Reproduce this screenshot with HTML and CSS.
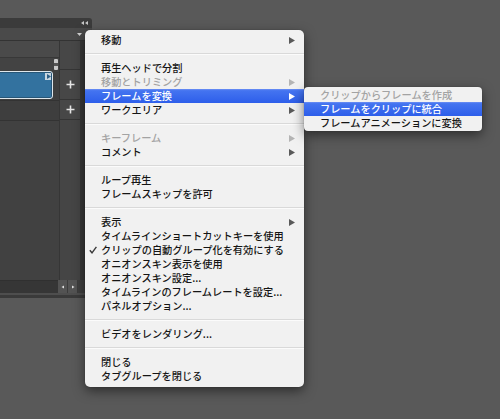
FILE: index.html
```html
<!DOCTYPE html>
<html lang="ja">
<head>
<meta charset="utf-8">
<title>Timeline menu</title>
<link rel="stylesheet" href="styles.css">
</head>
<body>
<div class="stage">
  <div class="panel">
    <div class="tabbar">
      <svg class="collapse" width="7" height="4" viewBox="0 0 7 4"><path d="M3 0 L0 2 L3 4Z M7 0 L4 2 L7 4Z" fill="#c8c8c8"/></svg>
    </div>
    <div class="toolbar">
      <svg class="dropdown" width="5" height="3" viewBox="0 0 5 3"><path d="M0 0 H5 L2.5 3Z" fill="#d0d0d0"/></svg>
    </div>
    <div class="timeline">
      <div class="tracks">
        <div class="ruler"></div>
        <div class="scrollrow"><div class="vthumb"><span></span></div></div>
        <div class="cliprow">
          <div class="clip">
            <div class="clip-btn"><svg width="5" height="5" viewBox="0 0 5 5"><path d="M1 0 L5 2.5 L1 5Z" fill="#2d5f86"/></svg></div>
          </div>
        </div>
        <div class="track"></div>
        <div class="empty"></div>
      </div>
      <div class="addcol">
        <div class="addcell top"></div>
        <div class="addcell clipadd"><svg width="9" height="9" viewBox="0 0 9 9"><path d="M4.5 0.5 V8.5 M0.5 4.5 H8.5" stroke="#e4e4e4" stroke-width="1.6"/></svg></div>
        <div class="addcell trackadd"><svg width="9" height="9" viewBox="0 0 9 9"><path d="M4.5 0.5 V8.5 M0.5 4.5 H8.5" stroke="#e4e4e4" stroke-width="1.6"/></svg></div>
        <div class="addcell rest"></div>
      </div>
      <div class="edge"></div>
    </div>
    <div class="hscroll">
      <div class="htrack"></div>
      <div class="hbtn"><svg width="4" height="4" viewBox="0 0 4 4"><path d="M3 0.5 L0.5 2 L3 3.5Z" fill="#e0e0e0"/></svg></div>
      <div class="hbtn"><svg width="4" height="4" viewBox="0 0 4 4"><path d="M1 0.5 L3.5 2 L1 3.5Z" fill="#e0e0e0"/></svg></div>
      <div class="hrest"></div>
    </div>
    <div class="panel-foot"></div>
  </div>

  <div class="menu main-menu">
    <div class="item sub">移動<svg class="arrow" viewBox="0 0 6 7"><path d="M0 0 L6 3.5 L0 7Z"/></svg></div>
    <div class="sep"></div>
    <div class="item">再生ヘッドで分割</div>
    <div class="item sub disabled">移動とトリミング<svg class="arrow" viewBox="0 0 6 7"><path d="M0 0 L6 3.5 L0 7Z"/></svg></div>
    <div class="item sub active">フレームを変換<svg class="arrow" viewBox="0 0 6 7"><path d="M0 0 L6 3.5 L0 7Z"/></svg></div>
    <div class="item sub">ワークエリア<svg class="arrow" viewBox="0 0 6 7"><path d="M0 0 L6 3.5 L0 7Z"/></svg></div>
    <div class="sep"></div>
    <div class="item sub disabled">キーフレーム<svg class="arrow" viewBox="0 0 6 7"><path d="M0 0 L6 3.5 L0 7Z"/></svg></div>
    <div class="item sub">コメント<svg class="arrow" viewBox="0 0 6 7"><path d="M0 0 L6 3.5 L0 7Z"/></svg></div>
    <div class="sep"></div>
    <div class="item">ループ再生</div>
    <div class="item">フレームスキップを許可</div>
    <div class="sep"></div>
    <div class="item sub">表示<svg class="arrow" viewBox="0 0 6 7"><path d="M0 0 L6 3.5 L0 7Z"/></svg></div>
    <div class="item">タイムラインショートカットキーを使用</div>
    <div class="item checked"><svg class="check" viewBox="0 0 8 8"><path d="M0.8 4.2 L3 6.8 L7.4 0.8" fill="none" stroke="#3a3a3a" stroke-width="1.4"/></svg>クリップの自動グループ化を有効にする</div>
    <div class="item">オニオンスキン表示を使用</div>
    <div class="item">オニオンスキン設定...</div>
    <div class="item">タイムラインのフレームレートを設定...</div>
    <div class="item">パネルオプション...</div>
    <div class="sep"></div>
    <div class="item">ビデオをレンダリング...</div>
    <div class="sep"></div>
    <div class="item">閉じる</div>
    <div class="item">タブグループを閉じる</div>
  </div>

  <div class="menu submenu">
    <div class="item disabled">クリップからフレームを作成</div>
    <div class="item active">フレームをクリップに統合</div>
    <div class="item">フレームアニメーションに変換</div>
  </div>
</div>
</body>
</html>
```

FILE: styles.css
```css
html, body {
  margin: 0;
  padding: 0;
  background: #595959;
}

.stage {
  position: relative;
  width: 500px;
  height: 419px;
  overflow: hidden;
  background: #595959;
  font-family: "Noto Sans CJK JP", "Noto Sans", sans-serif;
}

/* ---------- left panel ---------- */
.panel {
  width: 92px;
  padding-top: 18px;
  display: flex;
  flex-direction: column;
}

.tabbar {
  height: 10px;
  background: #3b3b3b;
  border-top-right-radius: 3px;
  display: flex;
  align-items: center;
  justify-content: flex-end;
  padding-right: 4px;
}

.toolbar {
  height: 12px;
  background: #4a4a4a;
  border-bottom: 1px solid #333;
  display: flex;
  align-items: center;
  justify-content: flex-end;
  padding-right: 10px;
}

.timeline {
  display: flex;
  height: 239px;
}

.tracks {
  width: 59px;
  display: flex;
  flex-direction: column;
  background: #414141;
}

.ruler {
  height: 16px;
  background: #4a4a4a;
  border-bottom: 1px solid #383838;
}

.scrollrow {
  height: 12px;
  background: #434343;
  display: flex;
  justify-content: flex-end;
  align-items: center;
}

.vthumb {
  width: 4px;
  height: 11px;
  margin-right: 1px;
  background: #c9c9c9;
  border-radius: 1px;
  display: flex;
  align-items: center;
}
.vthumb span {
  display: block;
  width: 4px;
  height: 3px;
  background: #555;
}

.cliprow {
  height: 29px;
  padding-top: 1px;
  border-bottom: 1px solid #333;
  background: #3f3f3f;
}

.clip {
  position: relative;
  width: 56px;
  height: 26px;
  margin-left: -5px;
  background: #33729f;
  border: 1px solid #dfe7ec;
  border-radius: 3px;
  box-shadow: 0 0 0 0.5px #1d3a50 inset;
}

.clip-btn {
  position: absolute;
  right: 1px;
  top: 1px;
  width: 6px;
  height: 7px;
  background: #c7d5df;
  display: flex;
  align-items: center;
  justify-content: center;
}

.track {
  height: 19px;
  background: #3e3e3e;
  border-bottom: 1px solid #333;
}

.empty {
  flex: 1;
  background: #414141;
}

.addcol {
  width: 20px;
  border-left: 1px solid #363636;
  display: flex;
  flex-direction: column;
  background: #474747;
}

.addcell {
  display: flex;
  align-items: center;
  justify-content: center;
  border-bottom: 1px solid #353535;
}
.addcell.top { height: 28px; }
.addcell.clipadd { height: 29px; }
.addcell.trackadd { height: 19px; }
.addcell.rest { flex: 1; border-bottom: 0; background: #454545; }

.edge {
  width: 12px;
  background: #383838;
}

.hscroll {
  height: 13px;
  display: flex;
  background: #3c3c3c;
}
.htrack {
  width: 58px;
  background: #363636;
  border-top: 1px solid #303030;
}
.hbtn {
  width: 9px;
  margin-right: 1px;
  background: #535353;
  display: flex;
  align-items: center;
  justify-content: center;
}
.hrest {
  flex: 1;
  background: #3f3f3f;
}

.panel-foot {
  height: 2px;
  background: #4e4e4e;
  border-bottom: 3px solid #3a3a3a;
}

/* ---------- menus ---------- */
.menu {
  position: absolute;
  background: #f1f1f1;
  box-shadow: 0 4px 12px rgba(0, 0, 0, 0.5), 0 0 1px rgba(0, 0, 0, 0.4);
  font-size: 10.2px;
  font-weight: 500;
  color: #151515;
}

.main-menu {
  left: 85px;
  top: 30px;
  width: 219px;
  padding: 3px 0 4px;
  border-radius: 5px;
}

.submenu {
  left: 304px;
  top: 87px;
  width: 178px;
  padding: 1px 0;
  border-radius: 4px;
}

.item {
  position: relative;
  height: 14px;
  line-height: 14px;
  padding-left: 16px;
  white-space: nowrap;
}

.item.disabled {
  color: #a3a3a3;
}

.item.active {
  color: #fff;
  background: linear-gradient(to bottom, #6d90f4 0%, #4474f0 12%, #2d5eea 100%);
}

.arrow {
  position: absolute;
  right: 9px;
  top: 3.5px;
  width: 6px;
  height: 7px;
  fill: #595959;
}
.disabled .arrow { fill: #b4b4b4; }
.active .arrow { fill: #fff; }

.check {
  position: absolute;
  left: 4px;
  top: 3px;
  width: 8px;
  height: 8px;
}

.sep {
  height: 14px;
  display: flex;
  flex-direction: column;
  justify-content: center;
}
.sep::before {
  content: "";
  display: block;
  height: 1px;
  background: #d9d9d9;
}
.sep::after {
  content: "";
  display: block;
  height: 1px;
  background: #fbfbfb;
}
```
